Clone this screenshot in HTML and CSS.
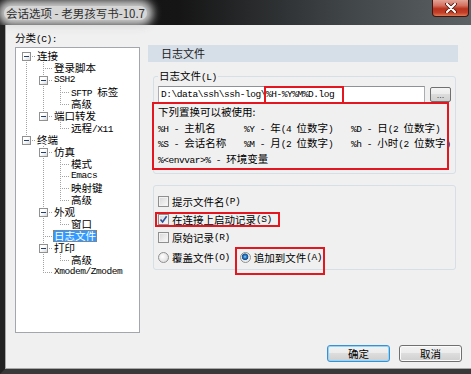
FILE: index.html
```html
<!DOCTYPE html>
<html lang="zh-CN">
<head>
    <meta charset="UTF-8">
    <title>会话选项</title>
    <link rel="stylesheet" href="styles.css">
</head>
<body>
    <div class="window">
        <div class="titlebar">
            <span class="title">会话选项 - 老男孩写书-10.7</span>
            <span class="close">
                <svg width="12" height="10" viewBox="0 0 12 10">
                    <path d="M2 1 L10 9 M10 1 L2 9" stroke="#4a1208" stroke-width="3.8" stroke-linecap="round"/>
                    <path d="M2 1 L10 9 M10 1 L2 9" stroke="#fff" stroke-width="2.2" stroke-linecap="round"/>
                </svg>
            </span>
        </div>

        <div class="client">
            <div class="main">
                <div class="cat">
                    <div class="cat-label">分类<span class="m">(C):</span></div>
                    <div class="tree">
                        <div class="row"><span class="c f"><i class="bx"></i></span><span class="lbl">连接</span></div>
                        <div class="row"><span class="c v"></span><span class="c t"></span><span class="lbl">登录脚本</span></div>
                        <div class="row"><span class="c v"></span><span class="c t"><i class="bx"></i></span><span class="lbl m">SSH2</span></div>
                        <div class="row"><span class="c v"></span><span class="c v"></span><span class="c t"></span><span class="lbl"><span class="m">SFTP </span>标签</span></div>
                        <div class="row"><span class="c v"></span><span class="c v"></span><span class="c l"></span><span class="lbl">高级</span></div>
                        <div class="row"><span class="c v"></span><span class="c l"><i class="bx"></i></span><span class="lbl">端口转发</span></div>
                        <div class="row"><span class="c v"></span><span class="c"></span><span class="c l"></span><span class="lbl">远程<span class="m">/X11</span></span></div>
                        <div class="row"><span class="c l"><i class="bx"></i></span><span class="lbl">终端</span></div>
                        <div class="row"><span class="c"></span><span class="c t"><i class="bx"></i></span><span class="lbl">仿真</span></div>
                        <div class="row"><span class="c"></span><span class="c v"></span><span class="c t"></span><span class="lbl">模式</span></div>
                        <div class="row"><span class="c"></span><span class="c v"></span><span class="c t"></span><span class="lbl m">Emacs</span></div>
                        <div class="row"><span class="c"></span><span class="c v"></span><span class="c t"></span><span class="lbl">映射键</span></div>
                        <div class="row"><span class="c"></span><span class="c v"></span><span class="c l"></span><span class="lbl">高级</span></div>
                        <div class="row"><span class="c"></span><span class="c t"><i class="bx"></i></span><span class="lbl">外观</span></div>
                        <div class="row"><span class="c"></span><span class="c v"></span><span class="c l"></span><span class="lbl">窗口</span></div>
                        <div class="row"><span class="c"></span><span class="c t"></span><span class="lbl sel">日志文件</span></div>
                        <div class="row"><span class="c"></span><span class="c t"><i class="bx"></i></span><span class="lbl">打印</span></div>
                        <div class="row"><span class="c"></span><span class="c v"></span><span class="c l"></span><span class="lbl">高级</span></div>
                        <div class="row"><span class="c"></span><span class="c l"></span><span class="lbl m">Xmodem/Zmodem</span></div>
                    </div>
                </div>

                <div class="page">
                    <div class="page-head">日志文件</div>

                    <fieldset class="grp grp-file">
                        <legend>日志文件<span class="m">(L)</span></legend>
                        <div class="path-row">
                            <div class="path"><span class="m">D:\data\ssh\ssh-log\</span><span class="m mark-path">%H-%Y%M%D.log</span></div>
                            <button class="dots">...</button>
                        </div>
                        <div class="subst">
                            <div class="subst-inner">
                                <div class="subst-title">下列置换可以被使用:</div>
                                <div class="subst-grid">
                                    <span><span class="m">%H - </span>主机名</span>
                                    <span><span class="m">%Y - </span>年<span class="m">(4 </span>位数字<span class="m">)</span></span>
                                    <span><span class="m">%D - </span>日<span class="m">(2 </span>位数字<span class="m">)</span></span>
                                    <span><span class="m">%S - </span>会话名称</span>
                                    <span><span class="m">%M - </span>月<span class="m">(2 </span>位数字<span class="m">)</span></span>
                                    <span><span class="m">%h - </span>小时<span class="m">(2 </span>位数字<span class="m">)</span></span>
                                    <span class="wide"><span class="m">%&lt;envvar&gt;% - </span>环境变量</span>
                                </div>
                            </div>
                        </div>
                    </fieldset>

                    <fieldset class="grp grp-opts">
                        <div class="opt"><i class="cb"></i>提示文件名<span class="m">(P)</span></div>
                        <div class="opt"><span class="mark-cb"><i class="cb on"><svg width="9" height="9" viewBox="0 0 9 9"><path d="M1.5 4.5 L3.6 7 L7.6 1.2" fill="none" stroke="#2f4f9a" stroke-width="1.6"/></svg></i>在连接上启动记录<span class="m">(S)</span></span></div>
                        <div class="opt"><i class="cb"></i>原始记录<span class="m">(R)</span></div>
                        <div class="opt radio-row">
                            <span class="radio-lbl"><i class="rb"></i>覆盖文件<span class="m">(O)</span></span>
                            <span class="mark-radio"><span class="radio-lbl small"><i class="rb on"></i>追加到文件<span class="m">(A)</span></span></span>
                        </div>
                    </fieldset>
                </div>
            </div>

            <div class="actions">
                <button class="btn btn-default">确定</button>
                <button class="btn">取消</button>
            </div>
        </div>
    </div>
</body>
</html>
```

FILE: styles.css
```css
body {
    margin: 0;
    font-family: "Noto Sans CJK SC", sans-serif;
    font-size: 10.5px;
    color: #000;
}
.window {
    width: 471px;
    height: 374px;
    display: flex;
    flex-direction: column;
    background-color: #f0f0f0;
    overflow: hidden;
}

/* title bar */
.titlebar {
    height: 25px;
    flex: none;
    display: flex;
    justify-content: space-between;
    align-items: flex-start;
    background: linear-gradient(to right, #121212 0, #151515 38%, #42474a 75%, #5c6164 100%);
}
.title {
    margin: 6px 0 0 4px;
    padding: 0 2px;
    height: 14px;
    line-height: 14px;
    font-size: 11.5px;
    color: #2e2e2e;
    background-color: #d6d6d6;
    border-radius: 8px;
    box-shadow: 0 0 8px 6px rgba(214, 214, 214, 0.95);
}
.close {
    width: 37px;
    height: 17px;
    margin-right: 2px;
    box-sizing: border-box;
    border: 1px solid #3e1510;
    border-top: none;
    border-radius: 0 0 4px 4px;
    background: linear-gradient(#e3a496 0, #d47060 35%, #b9321c 55%, #c3402a 80%, #de7a52 100%);
    display: flex;
    align-items: center;
    justify-content: center;
}

/* client area */
.client {
    flex: 1;
    display: flex;
    flex-direction: column;
    border-left: 5px solid #222;
    border-bottom: 5px solid #393939;
    box-shadow: inset 1px 0 #a8a8a8, inset 0 -1px #a8a8a8;
    padding: 7px 9px 0 10px;
}
.main {
    display: grid;
    grid-template-columns: 125px 310px;
    column-gap: 8px;
    align-items: start;
}
.m {
    font-family: "Liberation Mono", monospace;
    font-size: 9.5px;
    letter-spacing: -0.45px;
}

/* category tree */
.cat-label {
    height: 12px;
    line-height: 12px;
    margin-bottom: 3px;
}
.tree {
    height: 286px;
    box-sizing: border-box;
    border: 1px solid #a3a7ac;
    background-color: #fff;
    padding: 2px 0 0 2px;
    --dv: repeating-linear-gradient(to bottom, #a3a3a3 0 1px, transparent 1px 2px);
    --dh: repeating-linear-gradient(to right, #a3a3a3 0 1px, transparent 1px 2px);
}
.row {
    display: flex;
    height: 12px;
    line-height: 12px;
    white-space: nowrap;
}
.c {
    width: 17px;
    flex: none;
    display: flex;
    align-items: flex-start;
    justify-content: center;
}
.v {
    background: var(--dv) 8px 0 / 1px 12px no-repeat;
}
.t {
    background: var(--dh) 8px 6px / 9px 1px no-repeat, var(--dv) 8px 0 / 1px 12px no-repeat;
}
.l {
    background: var(--dh) 8px 6px / 9px 1px no-repeat, var(--dv) 8px 0 / 1px 7px no-repeat;
}
.f {
    background: var(--dh) 8px 6px / 9px 1px no-repeat, var(--dv) 8px 6px / 1px 6px no-repeat;
}
.bx {
    width: 9px;
    height: 9px;
    margin-top: 2px;
    box-sizing: border-box;
    border: 1px solid #919191;
    background: linear-gradient(#24406a, #24406a) center / 5px 1px no-repeat,
                linear-gradient(135deg, #fff 40%, #d9d9d9);
}
.lbl {
    height: 12px;
    margin-left: 1px;
    padding: 0 1px;
}
.sel {
    background-color: #3399ff;
    color: #fff;
    outline: 1px dotted #b0783a;
    outline-offset: -1px;
}

/* property page */
.page {
    margin-top: 13px;
}
.page-head {
    height: 17px;
    line-height: 17px;
    background-color: #d6dee8;
    padding-left: 13px;
    font-size: 11px;
    color: #1a1a1a;
}
.grp {
    margin: 8px 2px 0 5px;
    padding: 4px 4px 5px;
    border: 1px solid #d5dfe5;
    border-radius: 3px;
    min-width: 0;
}
.grp legend {
    height: 12px;
    padding: 0 1px;
    line-height: 12px;
}
.path-row {
    display: flex;
    align-items: center;
    gap: 5px;
    height: 17px;
}
.path {
    width: 267px;
    height: 17px;
    box-sizing: border-box;
    border: 1px solid #abadb3;
    border-top-color: #8e9196;
    background-color: #fff;
    display: flex;
    align-items: center;
    padding-left: 2px;
    white-space: nowrap;
}
.mark-path {
    display: inline-block;
    height: 14px;
    line-height: 14px;
    padding-right: 8px;
    outline: 2px solid #e3171f;
}
.dots {
    width: 21px;
    height: 15px;
    padding: 0;
    border: 1px solid #707070;
    border-radius: 2px;
    background: linear-gradient(#f4f4f4 0, #ebebeb 50%, #dcdcdc 50%, #d0d0d0 100%);
    font-family: "Liberation Sans", sans-serif;
    font-size: 9px;
    line-height: 10px;
    color: #444;
}
.subst {
    margin: 5px 0 0 -4px;
    width: 293px;
    box-sizing: border-box;
    padding: 0 0 2px 4px;
    outline: 2px solid #e3171f;
}
.subst-inner {
    margin-top: -4px;
    line-height: 15.5px;
    white-space: nowrap;
}
.subst-title {
    height: 15.5px;
}
.subst-grid {
    display: grid;
    grid-template-columns: 86px 107px auto;
    grid-auto-rows: 15.5px;
}
.subst-grid .wide {
    grid-column: 1 / -1;
}

.grp-opts {
    margin-top: 11px;
    padding: 6px 4px 3px;
}
.opt {
    height: 18px;
    display: flex;
    align-items: center;
    white-space: nowrap;
}
.cb {
    width: 11px;
    height: 11px;
    flex: none;
    box-sizing: border-box;
    margin-right: 3px;
    border: 1px solid #8f8f8f;
    background: linear-gradient(135deg, #d6d6d6, #fbfbfb);
    box-shadow: inset 0 0 0 1px #f2f2f2;
    display: flex;
    align-items: center;
    justify-content: center;
}
.mark-cb {
    display: flex;
    align-items: center;
    height: 11px;
    width: 121px;
    box-sizing: border-box;
    margin-left: -1px;
    padding-left: 1px;
    outline: 2px solid #e3171f;
}
.radio-row {
    margin-top: 2px;
    align-items: flex-start;
}
.radio-lbl {
    height: 18px;
    display: flex;
    align-items: center;
}
.radio-lbl.small {
    height: 12px;
}
.rb {
    width: 11px;
    height: 11px;
    flex: none;
    box-sizing: border-box;
    margin-right: 3px;
    border: 1px solid #8e8f8f;
    border-radius: 50%;
    background: radial-gradient(circle at 40% 40%, #fff, #d4d4d4);
}
.rb.on {
    background: radial-gradient(circle at 45% 42%, #8fdcff 0, #2b7cc8 1.5px, #1b4c8a 3px, #e6e6e6 3.6px, #fdfdfd 100%);
}
.mark-radio {
    margin: 1px 0 0 7px;
    width: 86px;
    height: 24px;
    box-sizing: border-box;
    padding: 2px 0 0 3px;
    outline: 2px solid #e3171f;
}

/* dialog buttons */
.actions {
    margin-top: 12px;
    display: flex;
    justify-content: flex-end;
    gap: 9px;
}
.btn {
    width: 63px;
    height: 17px;
    padding: 0;
    font: inherit;
    line-height: 15px;
    color: #000;
    border: 1px solid #707070;
    border-radius: 3px;
    background: linear-gradient(#f2f2f2 0, #ebebeb 50%, #dddddd 50%, #cfcfcf 100%);
    box-shadow: inset 0 0 0 1px #fbfbfb;
}
.btn-default {
    border-color: #3c8fd0;
    box-shadow: inset 0 0 0 1px #8fd6f7;
}
```
